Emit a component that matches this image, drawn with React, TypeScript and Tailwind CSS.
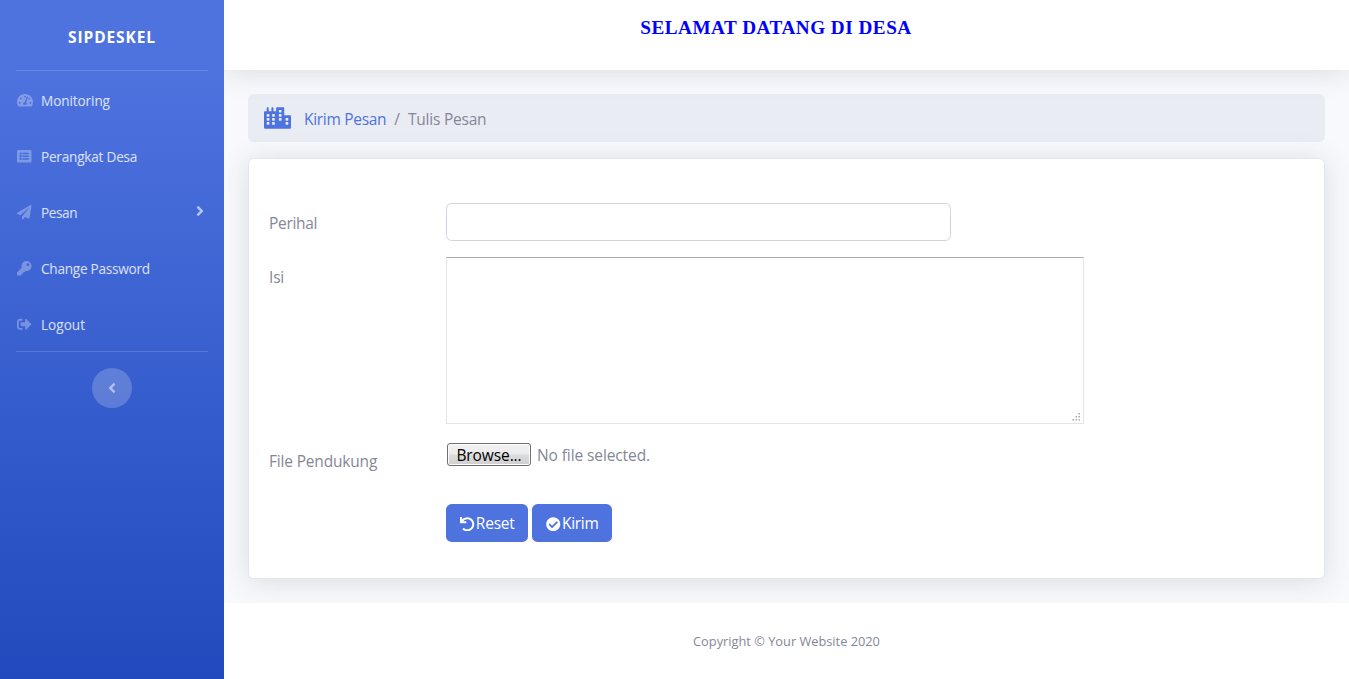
import React from "react";
import {
  FaAngleLeft,
  FaAngleRight,
  FaCheckCircle,
  FaCity,
  FaKey,
  FaListAlt,
  FaPaperPlane,
  FaSignOutAlt,
  FaTachometerAlt,
  FaUndo,
} from "react-icons/fa";

const menu = [
  { label: "Monitoring", Icon: FaTachometerAlt, size: "h-[14.5px] w-[16px]", tracking: "tracking-[-0.1px]" },
  { label: "Perangkat Desa", Icon: FaListAlt, size: "size-[14.5px]", tracking: "tracking-[-0.22px]" },
  { label: "Pesan", Icon: FaPaperPlane, size: "size-[14.5px]", arrow: true, tracking: "tracking-[-0.4px]" },
  { label: "Change Password", Icon: FaKey, size: "size-[14.5px]", tracking: "tracking-[-0.25px]" },
  { label: "Logout", Icon: FaSignOutAlt, size: "size-[14.5px]", tracking: "tracking-[0px]" },
];

function Sidebar() {
  return (
    <aside className="relative z-20 flex w-[224px] shrink-0 flex-col bg-[linear-gradient(180deg,#4e73df_10%,#224abe_100%)]">
      <div className="flex h-[70px] items-center justify-center pt-[3px] text-[15.5px] font-bold text-white">
        <span className="tracking-[0.9px]">SIPDESKEL</span>
      </div>
      <hr className="mx-4 border-t border-white/15" />
      <nav>
        {menu.map(({ label, Icon, size, arrow, tracking }) => (
          <a key={label} href="#" className="flex h-14 items-center px-4 pt-[3px] text-[13.6px] text-white/80">
            <span className="mr-2 flex w-[17px] justify-center">
              <Icon className={`shrink-0 text-white/30 ${size}`} />
            </span>
            <span className={tracking}>{label}</span>
            {arrow && <FaAngleRight className="-mt-1 ml-auto text-[16px] text-white/60" />}
          </a>
        ))}
      </nav>
      <hr className="mx-4 border-t border-white/15" />
      <button className="mx-auto mt-4 flex size-10 items-center justify-center rounded-full bg-white/20 text-white/50">
        <FaAngleLeft className="text-[16px]" />
      </button>
    </aside>
  );
}

function ResizeGrip() {
  return (
    <svg className="absolute right-[3px] bottom-[2px]" width="9" height="9" viewBox="0 0 9 9" fill="#a9a9a9">
      <path d="M6.5 0h1.5v1.5h-1.5zM3.5 3h1.5v1.5h-1.5zM6.5 3h1.5v1.5h-1.5zM.5 6h1.5v1.5h-1.5zM3.5 6h1.5v1.5h-1.5zM6.5 6h1.5v1.5h-1.5z" />
    </svg>
  );
}

export default function App() {
  return (
    <div className="flex h-[679px] w-full overflow-hidden bg-white font-['Open_Sans','Noto_Sans',sans-serif] text-[15.5px] leading-6 text-[#858796]">
      <Sidebar />
      <div className="flex min-w-0 flex-1 flex-col bg-[#f8f9fc]">
        <header className="relative z-10 flex h-[70px] shrink-0 justify-center bg-white pt-4 pr-[21px] shadow-[0_2.4px_28px_0_rgba(58,59,69,0.15)]">
          <h1 className="font-['Liberation_Serif',serif] text-[19.2px] font-bold tracking-[0.5px] text-[#0000ff]">SELAMAT DATANG DI DESA</h1>
        </header>
        <main className="flex h-[533px] shrink-0 flex-col overflow-hidden px-6 pt-6">
          <nav className="flex h-12 shrink-0 items-center rounded-[5.6px] bg-[#eaecf4] px-4">
            <FaCity className="mr-[13px] h-[22px] w-[27px] text-[#4e73df]" />
            <a href="#" className="pt-0.5 tracking-[-0.3px] text-[#4e73df]">Kirim Pesan</a>
            <span className="px-2 pt-0.5">/</span>
            <span className="pt-0.5 tracking-[-0.22px]">Tulis Pesan</span>
          </nav>
          <form className="mt-4 flex h-[421px] shrink-0 flex-col rounded-[5.6px] border border-[#e3e6f0] bg-white px-5 pt-11 shadow-[0_2.4px_28px_0_rgba(58,59,69,0.15)]">
            <div className="flex h-[38px]">
              <label className="w-[177px] pt-2 tracking-[-0.3px]">Perihal</label>
              <input type="text" className="h-[38px] w-[505px] rounded-[5.6px] border border-[#d1d3e2] bg-white px-3" />
            </div>
            <div className="mt-4 flex h-[167px]">
              <label className="w-[177px] pt-2 tracking-[-0.2px]">Isi</label>
              <div className="relative h-[167px] w-[638px]">
                <textarea className="block size-full resize-none rounded-[1px] border border-[#e3e3ea] border-t-[#ababab] bg-white" />
                <ResizeGrip />
              </div>
            </div>
            <div className="mt-4 flex h-[48px]">
              <label className="w-[177px] pt-[9px] tracking-[-0.18px]">File Pendukung</label>
              <div className="ml-px flex h-[29px] items-center">
                <button
                  type="button"
                  className="flex h-[23px] w-[84px] items-center justify-center rounded-[3px] border border-[#707070] bg-[linear-gradient(#f2f2f2_0%,#ebebeb_48%,#dddddd_52%,#cfcfcf_100%)] text-black shadow-[inset_0_0_0_1px_#fcfcfc]"
                >
                  <span className="tracking-[-0.1px]">Browse...</span>
                </button>
                <span className="ml-1.5 tracking-[-0.1px]">No file selected.</span>
              </div>
            </div>
            <div className="mt-4 ml-[177px] flex gap-1 text-white">
              <button type="reset" className="flex h-[38px] w-[82px] items-center justify-center rounded-[5.6px] bg-[#4e73df] pl-px">
                <FaUndo className="mt-0.5 mr-px text-[14.5px]" />
                <span className="tracking-[-0.2px]">Reset</span>
              </button>
              <button type="button" className="flex h-[38px] w-[80px] items-center justify-center rounded-[5.6px] bg-[#4e73df] pl-px">
                <FaCheckCircle className="mt-0.5 mr-px text-[14.5px]" />
                <span className="tracking-[-0.3px]">Kirim</span>
              </button>
            </div>
          </form>
        </main>
        <footer className="flex flex-1 items-center justify-center bg-white text-[12.8px]">
          <span>Copyright © Your Website 2020</span>
        </footer>
      </div>
    </div>
  );
}
